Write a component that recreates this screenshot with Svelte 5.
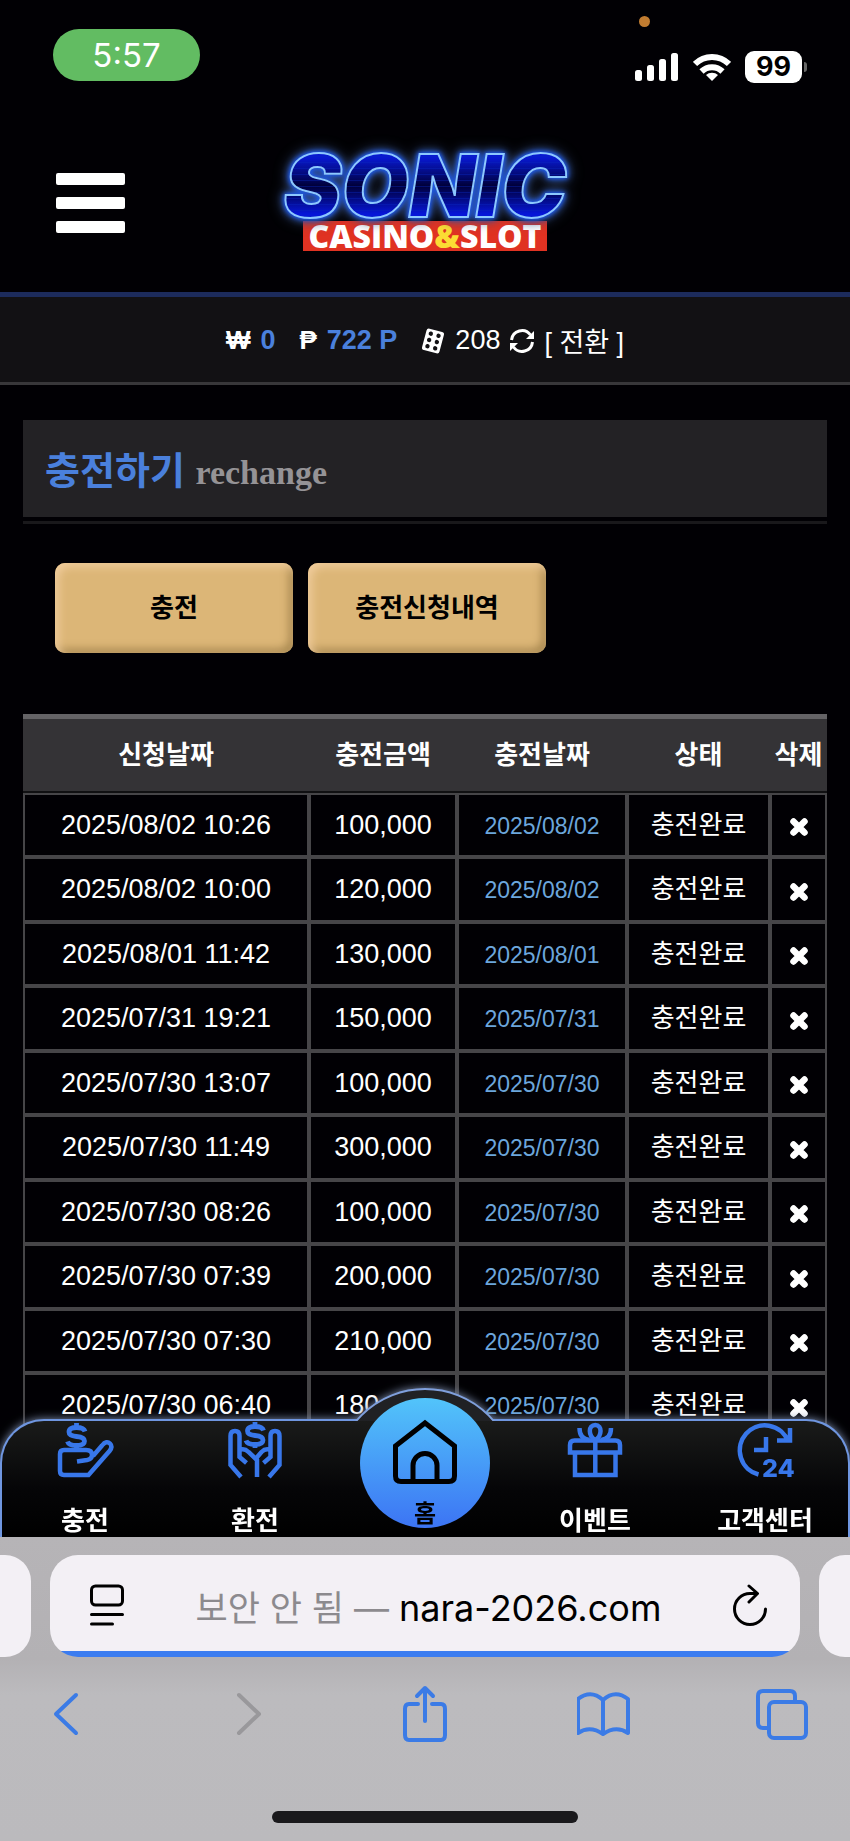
<script>
	const rows = [
		['2025/08/02 10:26', '100,000', '2025/08/02'],
		['2025/08/02 10:00', '120,000', '2025/08/02'],
		['2025/08/01 11:42', '130,000', '2025/08/01'],
		['2025/07/31 19:21', '150,000', '2025/07/31'],
		['2025/07/30 13:07', '100,000', '2025/07/30'],
		['2025/07/30 11:49', '300,000', '2025/07/30'],
		['2025/07/30 08:26', '100,000', '2025/07/30'],
		['2025/07/30 07:39', '200,000', '2025/07/30'],
		['2025/07/30 07:30', '210,000', '2025/07/30'],
		['2025/07/30 06:40', '180,000', '2025/07/30'],
	];

	let history = $state(rows.map(([requested, amount, charged]) => ({ requested, amount, charged })));

	function remove(row) {
		history = history.filter(item => item !== row);
	}
</script>

{#snippet dollar()}
	<path d="M27 8.500C26 5 23 4.500 18.500 4.500c-5 0-7.500 1.500-7.500 4.500s2.500 4 7.500 4.500 8 1.500 8 4.500-3 4.500-8 4.500c-5 0-8-1-9-4M18.500 0v5M18.500 22v4" stroke-width="4.800" />
{/snippet}

<div class="phone">
	<div class="status">
		<span class="clock">5:57</span>
		<div class="signals">
			<span class="mic-dot"></span>
			<svg width="44" height="28" viewBox="0 0 44 28" fill="#fff">
				<rect x="0" y="17" width="7" height="11" rx="2.500" />
				<rect x="12" y="12" width="7" height="16" rx="2.500" />
				<rect x="24" y="6" width="7" height="22" rx="2.500" />
				<rect x="36" y="0" width="7" height="28" rx="2.500" />
			</svg>
			<svg width="38" height="28" viewBox="0 0 38 28" fill="none" stroke="#fff" stroke-width="6">
				<path d="M2 11a24 24 0 0 1 34 0" />
				<path d="M8.500 18.500a15 15 0 0 1 21 0" />
				<path d="M19 28l-6-6a9 9 0 0 1 12 0z" fill="#fff" stroke="none" />
			</svg>
			<span class="battery">99</span>
		</div>
	</div>

	<div class="site">
		<header>
			<button class="menu" aria-label="menu"><i></i><i></i><i></i></button>
			<a class="logo" href="/">
				<span class="sonic">SONIC</span>
				<span class="casino">CASINO<b>&amp;</b>SLOT</span>
			</a>
		</header>

		<div class="wallet">
			<span class="sign">₩</span>
			<strong>0</strong>
			<span class="sign peso">₱</span>
			<strong>722 P</strong>
			<svg class="dice" width="24" height="26" viewBox="0 0 24 26">
				<g transform="rotate(15 12 13)">
					<rect x="3" y="2" width="18" height="22" rx="2.500" fill="#fff" />
					<g fill="#121114">
						<circle cx="8" cy="6.500" r="2.200" /><circle cx="16" cy="6.500" r="2.200" />
						<circle cx="8" cy="13" r="2.200" /><circle cx="16" cy="13" r="2.200" />
						<circle cx="8" cy="19.500" r="2.200" /><circle cx="16" cy="19.500" r="2.200" />
					</g>
				</g>
			</svg>
			<span>208</span>
			<button class="convert">
				<svg width="24" height="26" viewBox="0 0 24 26" fill="none" stroke="#fff" stroke-width="3">
					<path d="M1.500 12a10.500 10.500 0 0 1 19-5M22.500 14a10.500 10.500 0 0 1-19 5" />
					<path d="M24 3v8h-8zM0 23v-8h8z" fill="#fff" stroke="none" />
				</svg>
				[ 전환 ]
			</button>
		</div>

		<main>
			<div class="title">
				<h1>충전하기 <small>rechange</small></h1>
			</div>
			<div class="actions">
				<button>충전</button>
				<button>충전신청내역</button>
			</div>

			<table>
				<colgroup>
					<col><col class="c-amount"><col class="c-charged"><col class="c-state"><col class="c-remove">
				</colgroup>
				<thead>
					<tr><th>신청날짜</th><th>충전금액</th><th>충전날짜</th><th>상태</th><th>삭제</th></tr>
				</thead>
				<tbody>
					{#each history as row}
						<tr>
							<td>{row.requested}</td>
							<td>{row.amount}</td>
							<td><span class="charged">{row.charged}</span></td>
							<td><span class="state">충전완료</span></td>
							<td>
								<button class="remove" aria-label="삭제" onclick={() => remove(row)}>
									<svg width="20" height="20" viewBox="0 0 20 20" stroke="#fff" stroke-width="6.500" stroke-linecap="round">
										<path d="M4.500 4.500l11 11M15.500 4.500l-11 11" />
									</svg>
								</button>
							</td>
						</tr>
					{/each}
				</tbody>
			</table>
		</main>

		<nav>
			<div class="shape">
				<div class="panel"></div>
				<div class="bump"></div>
			</div>
			<a href="/charge">
				<svg viewBox="0 0 54 54">
					{@render dollar()}
					<path d="M35 33l9-10.500c3-4 6-4 8-2s1.500 5-.5 7.500L30.500 52H6q-4 0-4-4V31q0-4 4-4h22q6 0 6 5 0 4-5 5l-10 1.500" />
				</svg>
				<span>충전</span>
			</a>
			<a href="/exchange">
				<svg viewBox="0 0 54 54">
					<g transform="translate(8.500 -1)">{@render dollar()}</g>
					<path d="M13 54L2.500 42V13q0-5 4.500-5t4.500 5v21l7 6M11.500 27q5-2 9 2l8.500 8V54" />
					<path d="M41 54l10.500-12V13q0-5-4.500-5t-4.500 5v21l-7 6M42.500 27q-5-2-9 2l-6 7" />
				</svg>
				<span>환전</span>
			</a>
			<a class="home" href="/">
				<div class="ball">
					<svg viewBox="0 0 64 64">
						<path d="M2.500 26L32 3l29.500 23v30q0 5.500-5.500 5.500H8q-5.500 0-5.500-5.500zM20 61V45.500a12 12 0 0 1 24 0V61" />
					</svg>
					<span>홈</span>
				</div>
			</a>
			<a href="/event">
				<svg viewBox="0 0 54 54">
					<path d="M2 29.500V22q0-4.500 4.500-4.500h41q4.500 0 4.500 4.500v7.500zM7 29.500h40.500V52H7zM27.300 17v35" />
					<path d="M27.300 17C20 13 20 2 27.300 2S34 13 27.300 17M11.500 5q0 11 10 12M43 5q0 11-10 12" />
				</svg>
				<span>이벤트</span>
			</a>
			<a href="/support">
				<svg viewBox="0 0 54 54">
					<path d="M20.500 51.500A25 25 0 1 1 50 18M52 5v12.500H39M28 14v13H16" />
					<text x="24" y="54">24</text>
				</svg>
				<span>고객센터</span>
			</a>
		</nav>
	</div>

	<footer>
		<div class="tabs">
			<div class="peek left"></div>
			<div class="address">
				<button aria-label="reader">
					<svg width="34" height="42" viewBox="0 0 34 42" fill="none" stroke="#000" stroke-width="3" stroke-linecap="round">
						<rect x="1.500" y="2" width="31" height="19" rx="4" />
						<path d="M1.500 30.500h31M1.500 40h21" />
					</svg>
				</button>
				<p><span>보안 안 됨 —</span> nara-2026.com</p>
				<button aria-label="reload">
					<svg width="34" height="42" viewBox="0 0 34 42" fill="none" stroke="#000" stroke-width="3" stroke-linecap="round" stroke-linejoin="round">
						<path d="M23 9.500H17A15.500 15.500 0 1 0 32.500 25M16 2l8.500 7.500L16 18" />
					</svg>
				</button>
			</div>
			<div class="peek right"></div>
		</div>
		<div class="toolbar">
			<button aria-label="back"><svg viewBox="0 0 54 58"><path d="M36 10L16 29l20 19" /></svg></button>
			<button aria-label="forward" disabled><svg viewBox="0 0 54 58"><path d="M20 10l20 19-20 19" /></svg></button>
			<button aria-label="share"><svg viewBox="0 0 54 58"><path d="M20 19h-9q-4 0-4 5v26q0 5 4 5h32q4 0 4-5V24q0-5-4-5h-9M27 36V3M19 11l8-8 8 8" /></svg></button>
			<button aria-label="bookmarks"><svg viewBox="0 0 54 58"><path d="M26 15Q14 4 1 14v34q12-8 25 1 13-9 25-1V14Q38 4 26 15v34" /></svg></button>
			<button aria-label="tabs"><svg viewBox="0 0 54 58"><path d="M13 43H7q-5 0-5-5V11q0-5 5-5h27q5 0 5 5v6" /><rect x="13" y="17" width="37" height="36" rx="5" /></svg></button>
		</div>
		<div class="indicator"></div>
	</footer>
</div>

<style>
	:global(body) {
		background: #000;
	}

	.phone {
		display: flex;
		flex-direction: column;
		height: 100vh;
		overflow: hidden;
		color: #fff;
		background: #010004;
		font-family: "Liberation Sans", "Noto Sans CJK KR", sans-serif;
	}

	button {
		padding: 0;
		border: 0;
		background: none;
		color: inherit;
		font: inherit;
		cursor: pointer;
	}

	a {
		color: inherit;
		text-decoration: none;
	}

	svg {
		display: block;
		flex: none;
	}

	/* status bar */
	.status {
		display: flex;
		justify-content: space-between;
		align-items: flex-start;
		box-sizing: border-box;
		height: 110px;
		padding: 29px 44px 0 53px;
		font-family: Inter, sans-serif;
	}

	.clock {
		width: 147px;
		border-radius: 26px;
		background: #62bc62;
		font-size: 33px;
		line-height: 52px;
		text-align: center;
	}

	.signals {
		position: relative;
		display: flex;
		align-items: center;
		gap: 14px;
		padding-top: 22px;
	}

	.mic-dot {
		position: absolute;
		top: -13px;
		left: 4px;
		width: 11px;
		height: 11px;
		border-radius: 50%;
		background: #c17c31;
	}

	.battery {
		position: relative;
		width: 57px;
		margin-right: 4px;
		border-radius: 9px;
		background: #fff;
		color: #000;
		font-size: 27px;
		font-weight: 700;
		line-height: 32px;
		text-align: center;
	}

	.battery::after {
		content: "";
		position: absolute;
		top: 11px;
		right: -5px;
		width: 3px;
		height: 10px;
		border-radius: 0 4px 4px 0;
		background: #666;
	}

	/* page */
	.site {
		position: relative;
		flex: 1;
		min-height: 0;
		overflow: hidden;
	}

	header {
		display: grid;
		grid-template-columns: 1fr auto 1fr;
		align-items: center;
		height: 182px;
		padding: 0 56px;
		border-bottom: 5px solid #1c2b5c;
	}

	.menu {
		display: flex;
		flex-direction: column;
		gap: 12px;
		width: 69px;
		padding-top: 4px;
	}

	.menu i {
		height: 12px;
		border-radius: 2px;
		background: #fff;
	}

	.logo {
		display: flex;
		flex-direction: column;
		align-items: center;
	}

	.sonic {
		padding: 0 8px;
		background: repeating-linear-gradient(#0000 0 5px, #0a28c066 5px 6px), linear-gradient(#0818d0 10%, #00003a 50%, #0616d8 90%);
		-webkit-background-clip: text;
		background-clip: text;
		-webkit-text-stroke: 2px #8cc8ff;
		color: transparent;
		font-family: Inter, sans-serif;
		font-size: 87px;
		font-style: italic;
		font-weight: 900;
		line-height: 70px;
		filter: drop-shadow(0 0 2px #1c5cf0) drop-shadow(0 0 3px #1c50d8) drop-shadow(0 0 6px #3a5078);
	}

	.casino {
		padding: 0 6px;
		background: #e03222;
		font-family: "Open Sans", sans-serif;
		font-size: 32px;
		font-weight: 800;
		line-height: 30px;
	}

	.casino b {
		color: #fbdc34;
		font-weight: 800;
	}

	.wallet {
		display: flex;
		justify-content: center;
		align-items: center;
		gap: 10px;
		box-sizing: border-box;
		height: 88px;
		padding-top: 2px;
		border-bottom: 3px solid #38373a;
		background: #121114;
		font-size: 27px;
	}

	.wallet strong {
		color: #4a80dc;
	}

	.sign {
		font-size: 26px;
		font-weight: 700;
	}

	.peso,
	.dice {
		margin-left: 14px;
	}

	.convert {
		display: flex;
		align-items: center;
		gap: 10px;
	}

	main {
		padding: 35px 23px 0;
	}

	.title {
		padding-bottom: 4px;
		border-bottom: 3px solid #19181b;
	}

	h1 {
		margin: 0;
		padding: 6px 22px 0;
		background: #232225;
		color: #4a80dc;
		font-size: 38px;
		line-height: 91px;
	}

	h1 small {
		color: #959396;
		font-family: "Liberation Serif", serif;
		font-size: 34px;
		line-height: 1;
	}

	.actions {
		display: flex;
		gap: 15px;
		padding: 39px 32px 61px;
	}

	.actions button {
		flex: 0 1 238px;
		height: 90px;
		padding-bottom: 6px;
		border-radius: 10px;
		background: #dcb677;
		box-shadow: inset 4px 4px 8px #f0cc9c, inset -4px -4px 8px #a88850;
		color: #000;
		font-size: 26px;
		font-weight: 700;
	}

	table {
		width: 100%;
		border-spacing: 0;
		table-layout: fixed;
		font-size: 27px;
		text-align: center;
	}

	.c-amount {
		width: 148px;
	}

	.c-charged {
		width: 170px;
	}

	.c-state {
		width: 143px;
	}

	.c-remove {
		width: 57px;
	}

	th {
		box-sizing: border-box;
		height: 79px;
		padding: 0 0 6px;
		border-top: 5px solid #646366;
		border-bottom: 2px solid #101012;
		background: #343336;
		font-size: 26px;
		white-space: nowrap;
	}

	td {
		padding: 0;
		border: 2px solid #464548;
		line-height: 60px;
		white-space: nowrap;
	}

	tbody tr:nth-child(even) td {
		line-height: 61px;
	}

	.charged {
		color: #6ca6dc;
		font-size: 23px;
		line-height: 1;
	}

	.state {
		font-size: 26px;
		line-height: 1;
	}

	.remove {
		display: block;
		margin: 4px auto 0;
	}

	/* bottom menu */
	nav {
		position: absolute;
		right: 0;
		bottom: 0;
		left: 0;
		display: grid;
		grid-template-columns: repeat(5, 1fr);
		height: 118px;
	}

	.shape {
		position: absolute;
		inset: 0;
		filter: drop-shadow(0 0 5px #8090b0);
	}

	.panel {
		box-sizing: border-box;
		height: 100%;
		border: 2px solid #6f96e0;
		border-bottom: 0;
		border-radius: 44px 44px 0 0;
		background: linear-gradient(#1a1b1a, #050507 60%, #000);
	}

	.bump {
		position: absolute;
		top: -31px;
		left: calc(50% - 91px);
		box-sizing: border-box;
		width: 182px;
		height: 182px;
		border: 2px solid #7f9fdc;
		border-radius: 50%;
		background: #202124;
		clip-path: inset(0 0 149px 0);
	}

	nav a {
		position: relative;
		display: flex;
		flex-direction: column;
		align-items: center;
		justify-content: space-between;
		padding-top: 4px;
		font-size: 26px;
		font-weight: 700;
		line-height: 32px;
	}

	nav svg {
		width: 54px;
		height: 54px;
		fill: none;
		stroke: #3877ea;
		stroke-width: 4.5px;
		overflow: visible;
	}

	nav text {
		fill: #3877ea;
		stroke: none;
		font-family: Inter, sans-serif;
		font-size: 25px;
		font-weight: 800;
	}

	.ball {
		display: flex;
		flex-direction: column;
		align-items: center;
		gap: 14px;
		box-sizing: border-box;
		width: 130px;
		height: 130px;
		margin-top: -25px;
		padding-top: 22px;
		border-radius: 50%;
		background: linear-gradient(#52c4fa, #3c74f4);
		color: #000;
		font-size: 24px;
	}

	.ball svg {
		width: 64px;
		height: 64px;
		stroke: #000;
		stroke-width: 5;
	}

	/* browser bar */
	footer {
		display: flex;
		flex-direction: column;
		align-items: center;
		padding: 18px 0;
		background: linear-gradient(#b6b4b7, #b3b1b4 40%, #bcbbbe 52%, #bbbabd);
	}

	.tabs {
		display: flex;
		gap: 19px;
		width: 100%;
	}

	.peek {
		width: 31px;
		background: #f3f0f5;
	}

	.left {
		border-radius: 0 26px 26px 0;
	}

	.right {
		border-radius: 26px 0 0 26px;
	}

	.address {
		display: flex;
		flex: 1;
		align-items: center;
		justify-content: space-between;
		box-sizing: border-box;
		height: 102px;
		padding: 0 33px 2px 40px;
		border-radius: 28px;
		background: linear-gradient(#f3f0f5 96px, #3b7cf0 96px);
		color: #000;
		font-family: Inter, "Noto Sans CJK KR", sans-serif;
		font-size: 36px;
	}

	.address p {
		margin: 0;
		white-space: nowrap;
	}

	.address span {
		color: #8c8a8e;
		font-size: 35px;
	}

	.toolbar {
		display: flex;
		justify-content: space-between;
		align-self: stretch;
		padding: 28px 40px 68px;
	}

	.toolbar svg {
		width: 54px;
		height: 58px;
		fill: none;
		stroke: #3b7be6;
		stroke-width: 4;
		stroke-linecap: round;
		stroke-linejoin: round;
	}

	.toolbar button:disabled svg {
		stroke: #99989b;
	}

	.indicator {
		width: 36%;
		height: 12px;
		border-radius: 6px;
		background: #1a191c;
	}
</style>
